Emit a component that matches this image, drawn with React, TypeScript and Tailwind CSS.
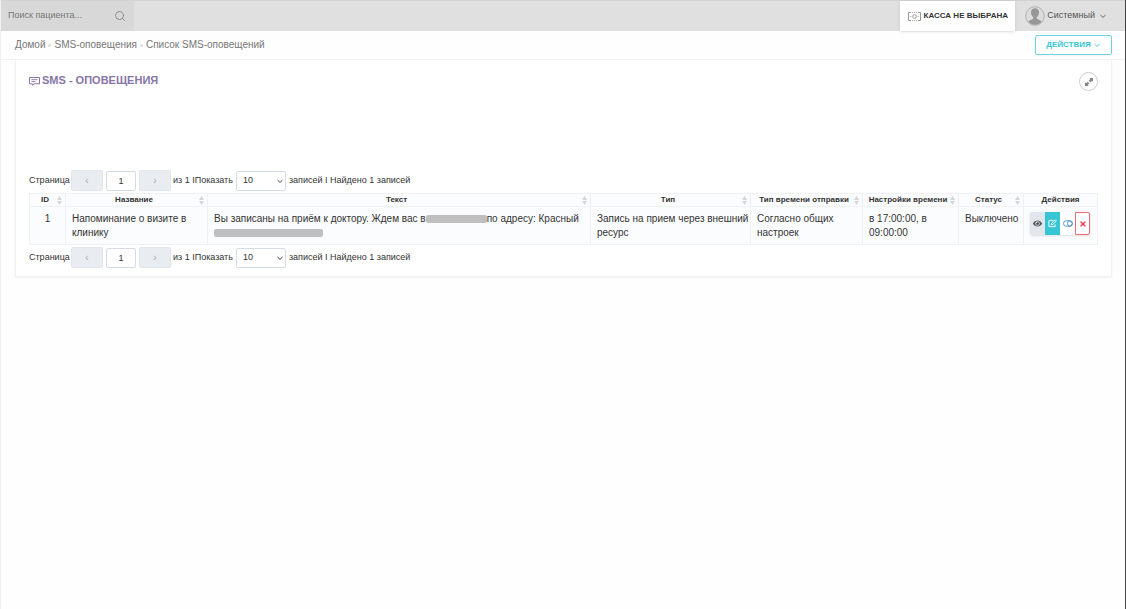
import React from 'react';
import { FaEye, FaTimes } from 'react-icons/fa';
import { FiSearch } from 'react-icons/fi';
import { clsx } from 'clsx';

const COLUMNS = [
    { title: 'ID', width: 'w-[36px]' },
    { title: 'Название', width: 'w-[142px]' },
    { title: 'Текст', width: '' },
    { title: 'Тип', width: 'w-[160px]' },
    { title: 'Тип времени отправки', width: 'w-[112px]' },
    { title: 'Настройки времени', width: 'w-[96px]' },
    { title: 'Статус', width: 'w-[65px]' },
    { title: 'Действия', width: 'w-[74px]' },
];

function Chevron({ className }: { className?: string }) {
    return (
        <svg viewBox="0 0 8 8" className={clsx('size-2', className)} fill="none" stroke="currentColor" strokeWidth=".9">
            <path d="M1.500 3L4 5.400 6.500 3" />
        </svg>
    );
}

function BanknoteIcon() {
    return (
        <svg viewBox="0 0 13 9" className="h-[9px] w-[13px] text-[#999]" fill="none" stroke="currentColor">
            <path d="M3 .5H.5v8H3M10 .5h2.500v8H10" />
            <path d="M4 .5h6M4 8.500h6" strokeDasharray="1 1" strokeWidth=".8" />
            <ellipse cx="6.500" cy="4.500" rx="1.700" ry="2" />
            <path d="M2.300 4.500h1M9.700 4.500h1" />
        </svg>
    );
}

function MessageIcon() {
    return (
        <svg viewBox="0 0 11 10" className="mt-[2px] h-[10px] w-[11px]" fill="none" stroke="currentColor">
            <path d="M.5 1.500h10v6.300H5L3.300 9.300V7.800H.5z" />
            <path d="M2.500 3.700h6M2.500 5.600h4" strokeWidth=".9" />
        </svg>
    );
}

function Avatar() {
    return (
        <svg viewBox="0 0 20 20" className="size-5">
            <circle cx="10" cy="10" r="9.300" fill="#dcdcdc" stroke="#a9a9a9" strokeWidth=".9" />
            <path
                d="M10 2.300c-2.700 0-4.100 1.800-4 4.200.1 2.100.9 3.700 2.200 4.700v1.200c-.5 1-3.900 1.400-4.800 3A8.700 8.700 0 0 0 10 18.700a8.700 8.700 0 0 0 6.600-3.300c-.9-1.600-4.300-2-4.800-3v-1.200c1.300-1 2.100-2.600 2.200-4.700.1-2.400-1.300-4.200-4-4.200z"
                fill="#979797"
            />
        </svg>
    );
}

function ExpandIcon() {
    return (
        <svg viewBox="0 0 10 10" className="size-[10px]" fill="#858585">
            <path d="M5.200 1H9v3.800L7.900 3.700 6.300 5.300 4.700 3.700l1.600-1.600zM1 5.200l1.100 1.100 1.600-1.600 1.600 1.600-1.600 1.600L4.800 9H1z" />
        </svg>
    );
}

function SortIcon() {
    return (
        <svg viewBox="0 0 5 9" className="h-[9px] w-[5px] shrink-0" fill="#d5d6d9">
            <path d="M2.500 0L5 4H0zM2.500 9L5 5H0z" />
        </svg>
    );
}

function EditIcon() {
    return (
        <svg viewBox="0 0 10 10" className="size-[9px]" fill="none" stroke="currentColor">
            <path d="M8 6v2.500H1v-7h5" />
            <path d="M3.600 6.500l.4-1.800L8 .9l1.300 1.300-4 3.900z" />
        </svg>
    );
}

function ToggleIcon() {
    return (
        <svg viewBox="0 0 10 7" className="h-[7px] w-[10px]" fill="none" stroke="currentColor" strokeWidth=".9">
            <rect x=".5" y=".8" width="9" height="5.400" rx="2.700" />
            <ellipse cx="6.800" cy="3.500" rx="2.300" ry="2.700" />
        </svg>
    );
}

function Pager({ id }: { id: string }) {
    const arrow = 'h-[21px] w-8 rounded-xs border border-[#e1e5ec] bg-[#e9ecf1] text-[10px] text-[#a5aab2]';
    return (
        <div className="flex items-center text-[9px] text-[#333]">
            <label htmlFor={`${id}-page`} className="w-[42px]">Страница</label>
            <button type="button" aria-label="Назад" className={arrow}>‹</button>
            <input
                id={`${id}-page`}
                defaultValue="1"
                className="mx-[3px] h-5 w-[30px] rounded-xs border border-[#d5dbe6] bg-white text-center text-[9px]"
            />
            <button type="button" aria-label="Вперед" className={arrow}>›</button>
            <label htmlFor={`${id}-size`} className="ml-[2px]">из 1 IПоказать</label>
            <div className="relative mx-[3px]">
                <select
                    id={`${id}-size`}
                    className="block h-5 w-[50px] appearance-none rounded-xs border border-[#d5dbe6] bg-white pl-[6px] text-[9px]"
                >
                    <option>10</option>
                </select>
                <Chevron className="pointer-events-none absolute top-[6px] right-[2px]" />
            </div>
            <span>записей I Найдено 1 записей</span>
        </div>
    );
}

function Redacted({ className }: { className: string }) {
    return <span className={clsx('inline-block h-2 rounded-xs bg-[#bfbfbf] align-middle', className)} />;
}

function SmsTable() {
    const cell = 'border border-[#eff1f4] pt-[5px] pr-px pb-1 pl-[6px]';
    const action = 'flex h-[23px] w-[15px] items-center justify-center';
    return (
        <table className="my-[2px] w-full table-fixed border-collapse bg-[#fbfcfd] text-[#333]">
            <colgroup>
                {COLUMNS.map((column) => <col key={column.title} className={column.width} />)}
            </colgroup>
            <thead>
                <tr className="text-[8px] leading-[12px]">
                    {COLUMNS.map((column, index) => (
                        <th key={column.title} scope="col" className="border border-[#eff1f4] px-[3px] py-0 font-bold">
                            <div className="flex items-center whitespace-nowrap">
                                <span className="flex-1 text-center">{column.title}</span>
                                {index < COLUMNS.length - 1 && <SortIcon />}
                            </div>
                        </th>
                    ))}
                </tr>
            </thead>
            <tbody>
                <tr className="align-top text-[10px] leading-[14px]">
                    <td className="border border-[#eff1f4] pt-[5px] text-center">1</td>
                    <td className={cell}>Напоминание о визите в клинику</td>
                    <td className={cell}>
                        Вы записаны на приём к доктору. Ждем вас в<Redacted className="w-[61px]" />по адресу: Красный
                        <br />
                        <Redacted className="w-[109px]" />
                    </td>
                    <td className={cell}>Запись на прием через внешний ресурс</td>
                    <td className={cell}>Согласно общих настроек</td>
                    <td className={cell}>в 17:00:00, в 09:00:00</td>
                    <td className={cell}>Выключено</td>
                    <td className={cell}>
                        <div className="flex w-max rounded-xs shadow-sm">
                            <button type="button" aria-label="Просмотр" className={clsx(action, 'rounded-l-xs bg-[#e1e5ec] text-[#555]')}>
                                <FaEye size={9} />
                            </button>
                            <button type="button" aria-label="Редактировать" className={clsx(action, 'bg-[#36c6d3] text-white')}>
                                <EditIcon />
                            </button>
                            <button type="button" aria-label="Включить" className={clsx(action, 'bg-white text-[#4b8ccb]')}>
                                <ToggleIcon />
                            </button>
                            <button type="button" aria-label="Удалить" className={clsx(action, 'rounded-r-xs border border-[#ed6b75] bg-white text-[#e73d4a]')}>
                                <FaTimes size={8} />
                            </button>
                        </div>
                    </td>
                </tr>
            </tbody>
        </table>
    );
}

export default function App() {
    return (
        <div className="min-h-screen border-r border-l border-r-[#444] border-l-[#f1f1f1] bg-[#fefefe] font-['Liberation_Sans',Arial,sans-serif]">
            <header className="flex h-[31px] items-stretch border-t border-[#d2d2d2] bg-[#e0e0e0]">
                <label className="flex w-[133px] items-center bg-[#d8d8d8] pr-2 pl-[7px] text-[#777]">
                    <input
                        aria-label="Поиск пациента"
                        placeholder="Поиск пациента..."
                        className="min-w-0 flex-1 bg-transparent text-[9px] placeholder:text-[#777]"
                    />
                    <FiSearch size={12} strokeWidth={1.5} />
                </label>
                <button type="button" className="ml-auto flex h-[30px] w-[115px] items-center justify-center gap-[3px] bg-white text-[8px] font-bold text-[#333] shadow">
                    <BanknoteIcon />
                    КАССА НЕ ВЫБРАНА
                </button>
                <button type="button" className="mr-[18px] ml-[10px] flex items-center gap-[2px] text-[9px] text-[#555]">
                    <Avatar />
                    Системный
                    <Chevron className="ml-[2px]" />
                </button>
            </header>

            <div className="flex h-[29px] items-center justify-between border-b border-[#eff1f3] pr-[13px] pl-[14px]">
                <nav className="flex items-center gap-[3px] text-[10px] leading-[14px] text-[#777]">
                    <a href="#home">Домой</a>
                    <span className="size-[3px] rounded-full bg-[#ddd]" />
                    <a href="#sms">SMS-оповещения</a>
                    <span className="size-[3px] rounded-full bg-[#ddd]" />
                    <a href="#list">Список SMS-оповещений</a>
                </nav>
                <button type="button" className="flex h-5 w-[77px] items-center justify-center gap-[2px] rounded-xs border border-[#6fd3dc] bg-white text-[8px] font-bold text-[#36c6d3] shadow-xs">
                    ДЕЙСТВИЯ
                    <Chevron />
                </button>
            </div>

            <main className="mr-[13px] ml-[14px] border border-t-0 border-[#eff1f4] bg-white px-[13px] pb-2 shadow-xs">
                <div className="flex h-[110px] items-start justify-between pt-3">
                    <h1 className="flex items-center gap-[2px] text-[11px] leading-4 font-bold text-[#8775a7]">
                        <MessageIcon />
                        SMS - ОПОВЕЩЕНИЯ
                    </h1>
                    <button type="button" aria-label="Развернуть" className="flex size-[19px] items-center justify-center rounded-full border border-[#ccc] bg-white">
                        <ExpandIcon />
                    </button>
                </div>
                <Pager id="top" />
                <SmsTable />
                <Pager id="bottom" />
            </main>
        </div>
    );
}
